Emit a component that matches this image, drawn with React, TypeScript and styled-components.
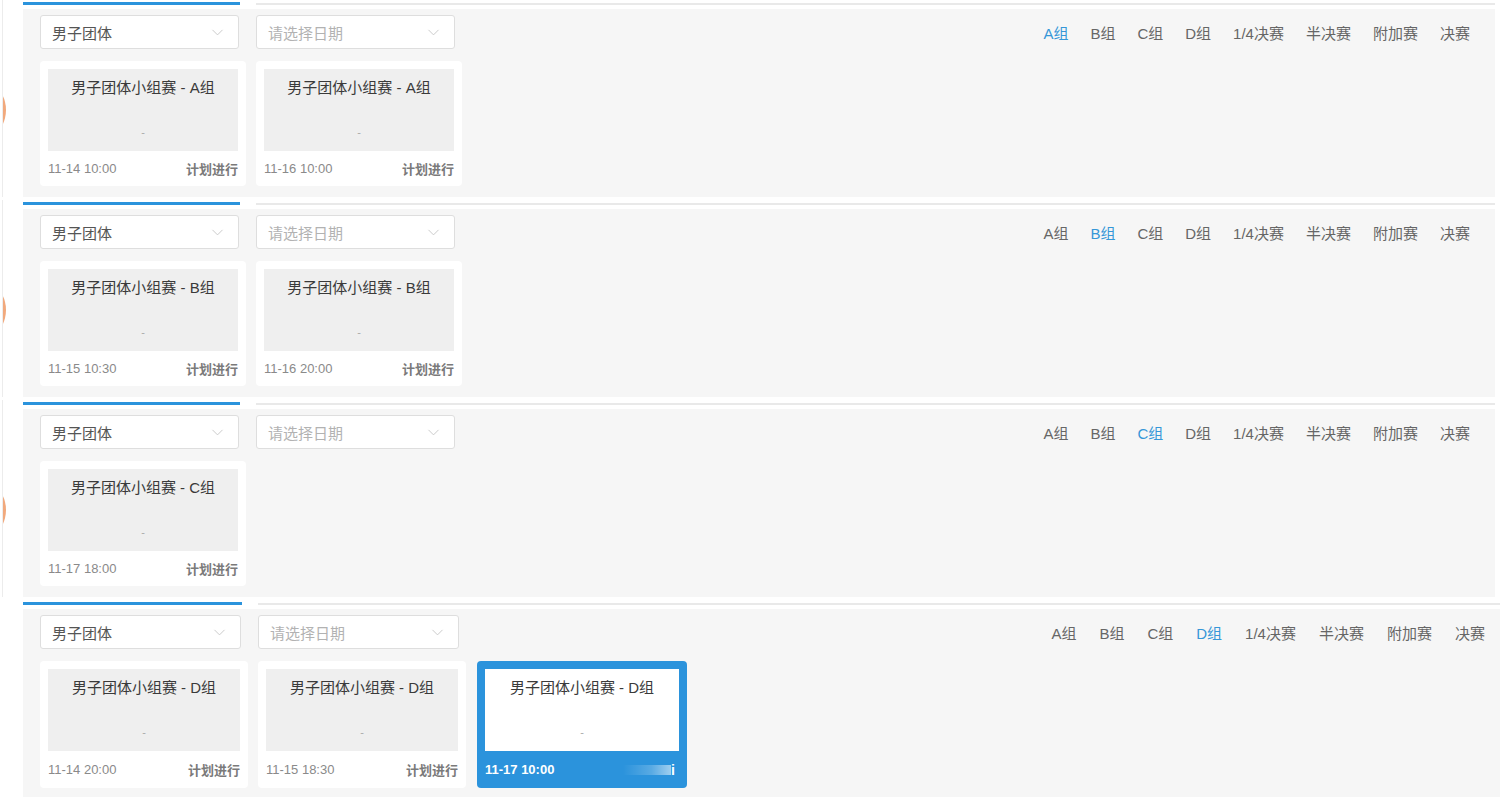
import { ChevronDown } from 'lucide-react'
import { FC } from 'react'
import styled, { createGlobalStyle } from 'styled-components'

const BLUE = '#2b93dc'

type Match = { title: string; time: string; active?: boolean }

type Section = {
  group: string
  matches: Match[]
  last?: boolean
}

const STAGES = ['A组', 'B组', 'C组', 'D组', '1/4决赛', '半决赛', '附加赛', '决赛']

const sections: Section[] = [
  {
    group: 'A组',
    matches: [
      { title: '男子团体小组赛 - A组', time: '11-14 10:00' },
      { title: '男子团体小组赛 - A组', time: '11-16 10:00' }
    ]
  },
  {
    group: 'B组',
    matches: [
      { title: '男子团体小组赛 - B组', time: '11-15 10:30' },
      { title: '男子团体小组赛 - B组', time: '11-16 20:00' }
    ]
  },
  {
    group: 'C组',
    matches: [{ title: '男子团体小组赛 - C组', time: '11-17 18:00' }]
  },
  {
    group: 'D组',
    last: true,
    matches: [
      { title: '男子团体小组赛 - D组', time: '11-14 20:00' },
      { title: '男子团体小组赛 - D组', time: '11-15 18:30' },
      { title: '男子团体小组赛 - D组', time: '11-17 10:00', active: true }
    ]
  }
]

const GlobalStyle = createGlobalStyle`
  html, body {
    margin: 0;
    padding: 0;
    background: #fff;
    font-family: "Liberation Sans", "Noto Sans CJK SC", sans-serif;
    color: #333;
  }
`

const Select: FC<{ value?: string; placeholder: string; wide?: boolean }> = ({ value, placeholder, wide }) => (
  <SelectBox $wide={wide}>
    <SelectText $placeholder={!value}>{value || placeholder}</SelectText>
    <ChevronDown size={19} strokeWidth={1.2} color="#c8c8c8" />
  </SelectBox>
)

const MatchCard: FC<{ match: Match; big?: boolean }> = ({ match, big }) => (
  <Card $active={match.active} $big={big}>
    <CardBody $active={match.active}>
      <CardTitle>{match.title}</CardTitle>
      <CardDash>-</CardDash>
    </CardBody>
    <CardFooter $big={big}>
      <CardTime $active={match.active}>{match.time}</CardTime>
      {match.active ? (
        <Fade>
          <FadeBar />
          <FadeDot>i</FadeDot>
        </Fade>
      ) : (
        <CardStatus>计划进行</CardStatus>
      )}
    </CardFooter>
  </Card>
)

const ScheduleSection: FC<{ section: Section }> = ({ section }) => (
  <SectionRow $last={section.last}>
    <Gutter $rail={!section.last}>{!section.last && <Blob />}</Gutter>
    <SectionMain $last={section.last}>
      <TabBar>
        <TabActive $wide={section.last} />
        <TabRest />
      </TabBar>
      <Panel $last={section.last}>
        <Toolbar>
          <Filters>
            <Select value="男子团体" placeholder="请选择" wide={section.last} />
            <Select placeholder="请选择日期" wide={section.last} />
          </Filters>
          <Stages $wide={section.last}>
            {STAGES.map((s) => (
              <Stage key={s} $active={s === section.group}>
                {s}
              </Stage>
            ))}
          </Stages>
        </Toolbar>
        <Cards>
          {section.matches.map((m, i) => (
            <MatchCard key={i} match={m} big={section.last} />
          ))}
        </Cards>
      </Panel>
    </SectionMain>
  </SectionRow>
)

const App: FC = () => (
  <>
    <GlobalStyle />
    <Page>
      {sections.map((s) => (
        <ScheduleSection key={s.group} section={s} />
      ))}
    </Page>
  </>
)

const Page = styled.div`
  width: 1500px;
  height: 797px;
  overflow: hidden;
  display: flex;
  flex-direction: column;
`

const SectionRow = styled.div<{ $last?: boolean }>`
  display: grid;
  grid-template-columns: 23px 1fr;
  padding-bottom: ${({ $last }) => ($last ? '0' : '3px')};
`

const Gutter = styled.div<{ $rail?: boolean }>`
  display: flex;
  align-items: center;
  border-left: ${({ $rail }) => ($rail ? '1px solid #ececec' : 'none')};
  margin-left: 2px;
  overflow: hidden;
`

const Blob = styled.div`
  width: 30px;
  height: 46px;
  margin-left: -27px;
  margin-top: 22px;
  border-radius: 50%;
  background: #ef9a66;
  opacity: 0.85;
`

const SectionMain = styled.div<{ $last?: boolean }>`
  display: flex;
  flex-direction: column;
  padding-top: 2px;
  margin-right: ${({ $last }) => ($last ? '0' : '5px')};
`

const TabBar = styled.div`
  display: flex;
  align-items: flex-start;
  gap: 16px;
  height: 3px;
  margin-bottom: 4px;
`

const TabActive = styled.div<{ $wide?: boolean }>`
  width: ${({ $wide }) => ($wide ? '219px' : '217px')};
  height: 3px;
  background: ${BLUE};
`

const TabRest = styled.div`
  flex: 1;
  height: 2px;
  margin-top: 1px;
  background: #e9e9e9;
`

const Panel = styled.div<{ $last?: boolean }>`
  background: #f6f6f6;
  padding: 6px ${({ $last }) => ($last ? '15px' : '25px')} 11px 17px;
  display: flex;
  flex-direction: column;
  gap: 12px;
`

const Toolbar = styled.div`
  display: flex;
  justify-content: space-between;
  align-items: center;
  height: 34px;
`

const Filters = styled.div`
  display: flex;
  gap: 17px;
`

const SelectBox = styled.div<{ $wide?: boolean }>`
  box-sizing: border-box;
  width: ${({ $wide }) => ($wide ? '201px' : '199px')};
  height: 34px;
  background: #fff;
  border: 1px solid #dedede;
  border-radius: 3px;
  display: flex;
  align-items: center;
  justify-content: space-between;
  padding: 0 11px 0 11px;
`

const SelectText = styled.span<{ $placeholder?: boolean }>`
  font-size: 15px;
  color: ${({ $placeholder }) => ($placeholder ? '#b2b2b2' : '#555')};
`

const Stages = styled.div<{ $wide?: boolean }>`
  display: flex;
  gap: ${({ $wide }) => ($wide ? '23px' : '22px')};
`

const Stage = styled.span<{ $active?: boolean }>`
  font-size: 15px;
  color: ${({ $active }) => ($active ? '#3597d8' : '#666')};
  cursor: pointer;
`

const Cards = styled.div`
  display: flex;
  gap: 10px;
`

const Card = styled.div<{ $active?: boolean; $big?: boolean }>`
  box-sizing: border-box;
  width: ${({ $big, $active }) => ($active ? '210px' : $big ? '208px' : '206px')};
  margin-left: ${({ $active }) => ($active ? '1px' : '0')};
  padding: 8px 8px 0;
  border-radius: 4px;
  background: ${({ $active }) => ($active ? BLUE : '#fff')};
  display: flex;
  flex-direction: column;
`

const CardBody = styled.div<{ $active?: boolean }>`
  height: 82px;
  background: ${({ $active }) => ($active ? '#fff' : '#efefef')};
  display: flex;
  flex-direction: column;
  align-items: center;
  padding-top: 8px;
  box-sizing: border-box;
`

const CardTitle = styled.div`
  font-size: 15px;
  color: #3a3a3a;
  line-height: 22px;
`

const CardDash = styled.div`
  margin-top: 27px;
  font-size: 11px;
  color: #aaa;
`

const CardFooter = styled.div<{ $big?: boolean }>`
  height: ${({ $big }) => ($big ? '37px' : '35px')};
  display: flex;
  align-items: center;
  justify-content: space-between;
`

const CardTime = styled.span<{ $active?: boolean }>`
  font-size: 13px;
  color: ${({ $active }) => ($active ? '#fff' : '#8a8a8a')};
  font-weight: ${({ $active }) => ($active ? 700 : 400)};
`

const CardStatus = styled.span`
  font-size: 13px;
  color: #7a7a7a;
  font-weight: 700;
`

const Fade = styled.span`
  display: flex;
  align-items: center;
  margin-right: 4px;
`

const FadeBar = styled.span`
  width: 48px;
  height: 10px;
  background: linear-gradient(90deg, rgba(255, 255, 255, 0), rgba(255, 255, 255, 0.22) 60%, rgba(255, 255, 255, 0.55));
`

const FadeDot = styled.span`
  font-size: 14px;
  font-weight: 700;
  color: #fff;
  line-height: 1;
`

export default App
